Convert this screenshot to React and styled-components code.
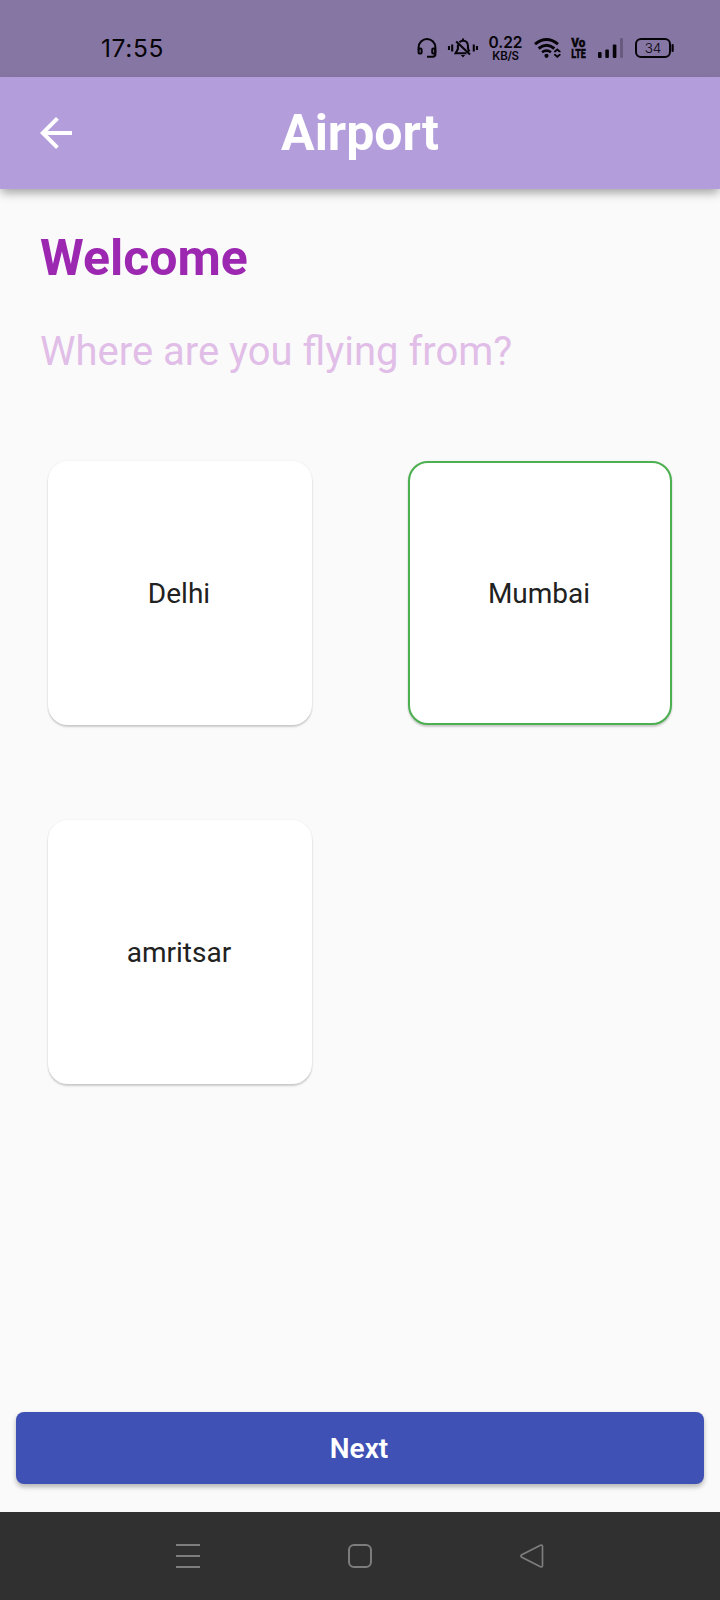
import React from "react";
import styled, { createGlobalStyle } from "styled-components";

const GlobalStyle = createGlobalStyle`
  * { box-sizing: border-box; }
  html, body { margin: 0; padding: 0; }
  body { background: #fafafa; font-family: Roboto, "Liberation Sans", sans-serif; }
`;

const Screen = styled.div`
  width: 720px;
  height: 1600px;
  display: flex;
  flex-direction: column;
  background: #fafafa;
  overflow: hidden;
`;

const StatusBar = styled.div`
  flex: none;
  height: 77px;
  padding: 38px 46px 0 101px;
  display: flex;
  align-items: flex-start;
  background: #8676a4;
  color: #060408;
  font-family: Inter, sans-serif;
`;

const Clock = styled.div`
  flex: 1;
  font-size: 24.5px;
  line-height: 20px;
  letter-spacing: 0.65px;
  white-space: nowrap;
`;

const StatusIcon = styled.svg`
  display: block;
  flex: none;
  width: ${(p) => p.$w}px;
  height: 20px;
  margin-right: ${(p) => p.$gap || 0}px;
  overflow: visible;
`;

const StackedLabel = styled.div`
  flex: none;
  width: ${(p) => p.$w}px;
  margin-right: ${(p) => p.$gap}px;
  display: flex;
  flex-direction: column;
  align-items: center;
  white-space: nowrap;
`;

const Speed = styled.span`
  font-size: 15.5px;
  font-weight: 600;
  line-height: 12px;
  margin-top: -1px;
`;

const SpeedUnit = styled.span`
  font-size: 11.5px;
  font-weight: 600;
  line-height: 12px;
  margin-top: 1px;
  letter-spacing: -0.3px;
`;

const NetworkText = styled.text`
  font-family: Roboto, sans-serif;
  font-weight: 900;
  font-size: 12px;
  stroke: #060408;
  stroke-width: 0.35px;
`;

const AppBar = styled.header`
  flex: none;
  position: relative;
  height: 112px;
  display: grid;
  grid-template-columns: 112px 1fr 112px;
  align-items: center;
  background: #b39ddb;
  box-shadow: 0 5px 9px -1px rgba(0, 0, 0, 0.34);
`;

const BackButton = styled.button`
  display: flex;
  align-items: center;
  justify-content: center;
  width: 112px;
  height: 112px;
  padding: 0;
  border: 0;
  background: none;
`;

const Title = styled.h1`
  margin: 0;
  text-align: center;
  font-size: 50px;
  line-height: 58px;
  font-weight: 700;
  color: #fff;
`;

const Content = styled.main`
  flex: 1;
  display: flex;
  flex-direction: column;
`;

const Intro = styled.section`
  height: 224px;
  padding: 40px 40px 0;
`;

const Heading = styled.h2`
  margin: 0;
  font-size: 50px;
  line-height: 58px;
  font-weight: 700;
  color: #9c27b0;
`;

const Question = styled.p`
  margin: 41px 0 0;
  font-size: 40px;
  line-height: 48px;
  color: #e1bee7;
`;

const CityGrid = styled.div`
  display: grid;
  grid-template-columns: repeat(2, 264px);
  grid-auto-rows: 264px;
  gap: 95px 96px;
  padding: 48px;
`;

const CityCard = styled.button`
  display: flex;
  align-items: center;
  justify-content: center;
  padding: 0 2px 0 0;
  border: 2px solid ${(p) => (p.$selected ? "#4caf50" : "#fff")};
  border-radius: 20px;
  background: #fff;
  color: #212121;
  font-family: inherit;
  font-size: 28px;
  box-shadow: 0 2px 2px rgba(0, 0, 0, 0.18), 0 0 2px rgba(0, 0, 0, 0.08);
`;

const NextButton = styled.button`
  margin: auto 16px 28px;
  height: 72px;
  padding: 0 2px 0 0;
  border: 0;
  border-radius: 8px;
  background: #3f51b5;
  color: #fff;
  font-family: inherit;
  font-size: 28px;
  font-weight: 600;
  box-shadow: 0 3px 5px rgba(0, 0, 0, 0.28);
`;

const NavBar = styled.nav`
  flex: none;
  height: 88px;
  padding: 0 174px;
  display: flex;
  align-items: center;
  justify-content: space-between;
  background: #303030;
`;

const NavIcon = styled.svg`
  display: block;
  width: 28px;
  height: 28px;
  fill: none;
  stroke: #7d7d7d;
  stroke-width: 2;
`;

function Headset() {
  return (
    <StatusIcon $w={20} $gap={11} viewBox="0 0 20 20" fill="none" stroke="#060408" strokeWidth="2">
      <path d="M1.6 12V9.4a8.4 8.4 0 0 1 16.8 0V16q0 2.8-2.8 2.8H10" />
      <rect x="1.6" y="10.6" width="3" height="5" rx="1.2" />
      <rect x="15.2" y="10.6" width="3" height="5" rx="1.2" />
    </StatusIcon>
  );
}

function BellOff() {
  return (
    <StatusIcon $w={30} $gap={11} viewBox="0 0 30 20" fill="none" stroke="#060408" strokeWidth="2.1">
      <path d="M1 8v4M4.2 6.500v7M25.800 6.500v7M29 8v4" />
      <path d="M11.500 4.200Q13 2.700 15 2.700q5 0 5 5.500v3M9.900 6.500V11L7.600 15.300H18.500" />
      <path d="M8.200 3.500L22 16.500M15 0.500v2M20 11l1.500 2.500" />
      <path d="M12.800 17h4.400l-2.200 2.600z" fill="#060408" stroke="none" />
    </StatusIcon>
  );
}

function Wifi() {
  return (
    <StatusIcon $w={26} $gap={11} viewBox="0 0 26 20" fill="none" stroke="#060408" strokeWidth="2.900">
      <path d="M1 6.200Q12.500-3 24 6.200" />
      <path d="M4.600 10.500Q12.500 4.200 20.400 10.500" />
      <path d="M8 14.200Q12.500 10.900 17 14.200" strokeWidth="2.600" />
      <circle cx="12.500" cy="17.800" r="2.100" fill="#060408" stroke="none" />
      <path d="M21 14.300v-.8l2.300-2 2.300 2v.8M21 16v.8l2.300 2 2.300-2V16" strokeWidth="1.900" />
    </StatusIcon>
  );
}

function VoLte() {
  return (
    <StatusIcon $w={16} $gap={11} viewBox="0 0 16 20" fill="#060408">
      <NetworkText>
        <tspan x="0.300" y="9.300" textLength="14" lengthAdjust="spacingAndGlyphs">Vo</tspan>
        <tspan x="0.300" y="20" textLength="14.500" lengthAdjust="spacingAndGlyphs">LTE</tspan>
      </NetworkText>
    </StatusIcon>
  );
}

function Signal() {
  return (
    <StatusIcon $w={26} $gap={11} viewBox="0 0 26 20" fill="#060408">
      <rect x="0" y="14" width="3.600" height="6" rx="1" />
      <rect x="7.300" y="11.500" width="3.600" height="8.500" rx="1" />
      <rect x="14.800" y="6.500" width="3.600" height="13.500" rx="1" />
      <rect x="22" y="0" width="3" height="20" rx="1" opacity="0.240" />
    </StatusIcon>
  );
}

function Battery() {
  return (
    <StatusIcon $w={39} viewBox="0 0 39 20" fill="none" stroke="#060408" strokeWidth="2">
      <rect x="1" y="1" width="34" height="18" rx="5" />
      <path d="M37.600 7v6" strokeWidth="2.200" strokeLinecap="round" />
      <text x="18" y="15" textAnchor="middle" fill="#060408" stroke="none" fontSize="13.500" fontWeight="300" fontFamily="Inter, sans-serif">34</text>
    </StatusIcon>
  );
}

const cities = ["Delhi", "Mumbai", "amritsar"];

export default function App() {
  const [selected, setSelected] = React.useState("Mumbai");
  return (
    <Screen>
      <GlobalStyle />
      <StatusBar>
        <Clock>17:55</Clock>
        <Headset />
        <BellOff />
        <StackedLabel $w={33} $gap={12}>
          <Speed>0.22</Speed>
          <SpeedUnit>KB/S</SpeedUnit>
        </StackedLabel>
        <Wifi />
        <VoLte />
        <Signal />
        <Battery />
      </StatusBar>
      <AppBar>
        <BackButton aria-label="Back">
          <svg width="48" height="48" viewBox="0 0 24 24" fill="#fff">
            <path d="M20 11H7.830l5.590-5.590L12 4l-8 8 8 8 1.410-1.410L7.830 13H20v-2z" />
          </svg>
        </BackButton>
        <Title>Airport</Title>
      </AppBar>
      <Content>
        <Intro>
          <Heading>Welcome</Heading>
          <Question>Where are you flying from?</Question>
        </Intro>
        <CityGrid>
          {cities.map((city) => (
            <CityCard key={city} $selected={city === selected} onClick={() => setSelected(city)}>
              {city}
            </CityCard>
          ))}
        </CityGrid>
        <NextButton>Next</NextButton>
      </Content>
      <NavBar>
        <NavIcon viewBox="0 0 28 28">
          <path d="M2 3h24M2 14h24M2 25h24" />
        </NavIcon>
        <NavIcon viewBox="0 0 28 28">
          <rect x="3" y="3" width="22" height="22" rx="5" />
        </NavIcon>
        <NavIcon viewBox="0 0 28 28">
          <path d="M22.500 3.200L3.800 12.800q-1.800 1.200 0 2.400L22.500 24.800q2 .7 2-1.500V4.700q0-2.200-2-1.500z" strokeWidth="1.700" />
        </NavIcon>
      </NavBar>
    </Screen>
  );
}
